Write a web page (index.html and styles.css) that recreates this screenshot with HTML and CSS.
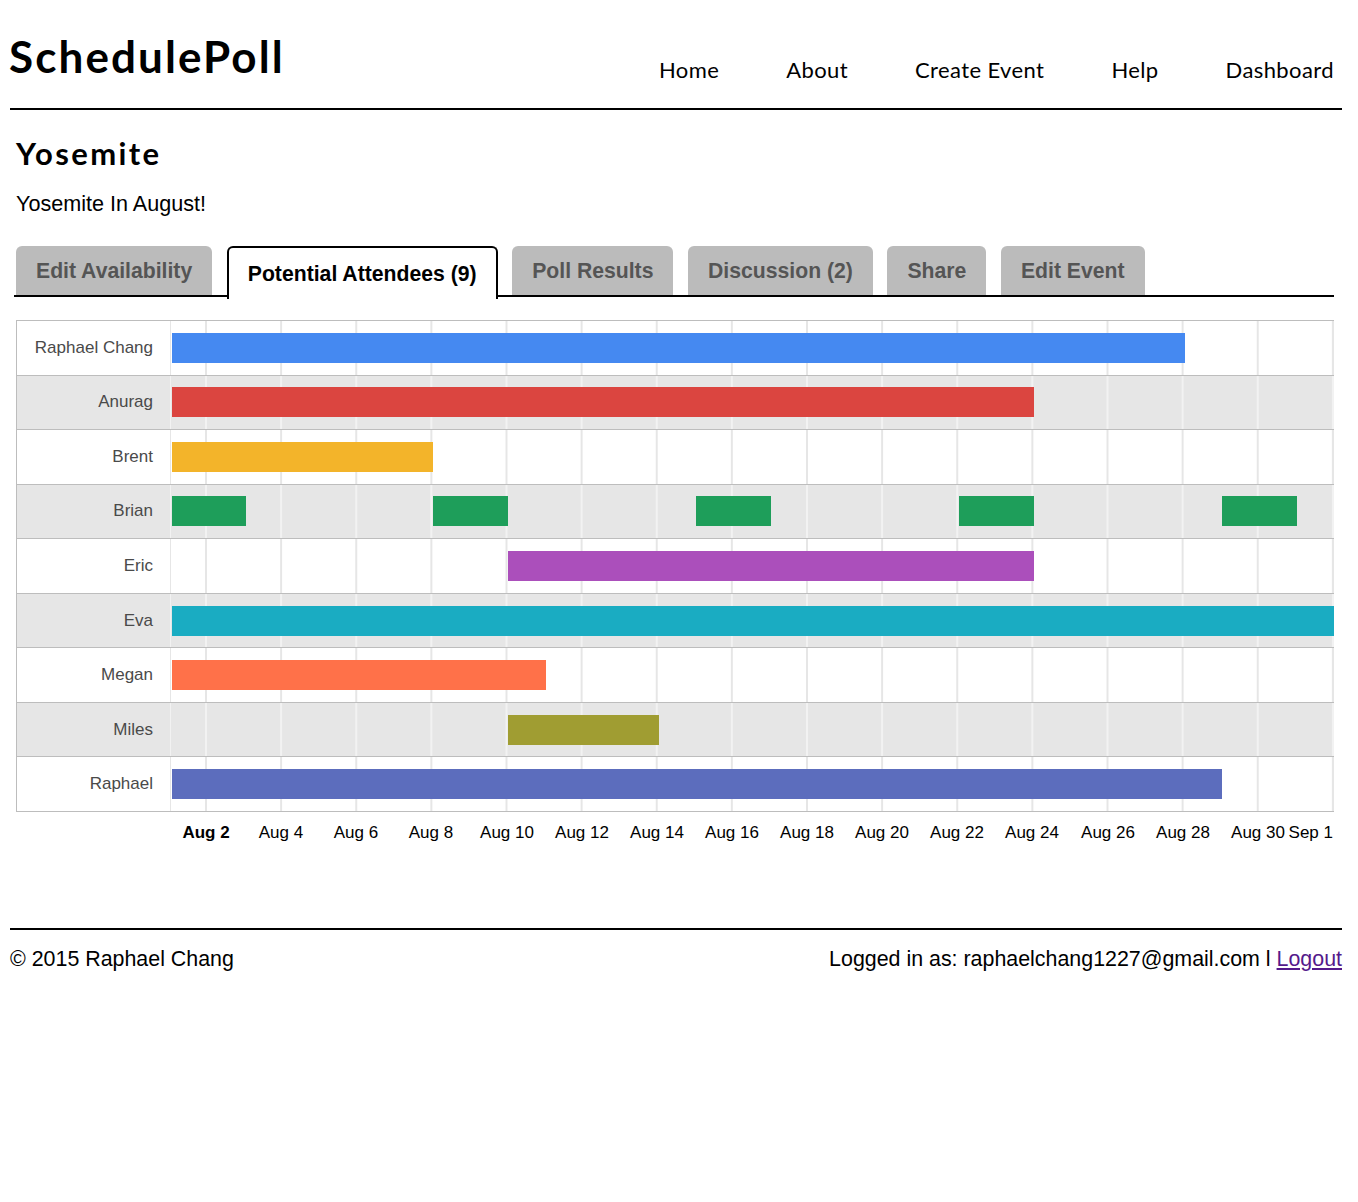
FILE: index.html
```html
<!DOCTYPE html>
<html lang="en">
<head>
<meta charset="utf-8">
<title>SchedulePoll - Yosemite</title>
<link rel="stylesheet" href="styles.css">
</head>
<body>
<div class="page">
  <header class="site-header">
    <div class="logo">SchedulePoll</div>
    <nav class="nav">
      <a class="nav-link" href="#">Home</a>
      <a class="nav-link" href="#">About</a>
      <a class="nav-link" href="#">Create Event</a>
      <a class="nav-link" href="#">Help</a>
      <a class="nav-link" href="#">Dashboard</a>
    </nav>
  </header>

  <main class="content">
    <h1 class="event-title">Yosemite</h1>
    <p class="event-desc">Yosemite In August!</p>

    <div class="tabs">
      <div class="tab">Edit Availability</div>
      <div class="tab active">Potential Attendees (9)</div>
      <div class="tab">Poll Results</div>
      <div class="tab">Discussion (2)</div>
      <div class="tab">Share</div>
      <div class="tab">Edit Event</div>
    </div>

    <div class="chart">
      <div class="row">
        <div class="label">Raphael Chang</div>
        <div class="track"><span class="bar c-blue" style="left:1px;width:1013px"></span></div>
      </div>
      <div class="row alt">
        <div class="label">Anurag</div>
        <div class="track"><span class="bar c-red" style="left:1px;width:862px"></span></div>
      </div>
      <div class="row">
        <div class="label">Brent</div>
        <div class="track"><span class="bar c-yellow" style="left:1px;width:261px"></span></div>
      </div>
      <div class="row alt">
        <div class="label">Brian</div>
        <div class="track">
          <span class="bar c-green" style="left:1px;width:74px"></span>
          <span class="bar c-green" style="left:262px;width:75px"></span>
          <span class="bar c-green" style="left:525px;width:75px"></span>
          <span class="bar c-green" style="left:788px;width:75px"></span>
          <span class="bar c-green" style="left:1051px;width:75px"></span>
        </div>
      </div>
      <div class="row">
        <div class="label">Eric</div>
        <div class="track"><span class="bar c-purple" style="left:337px;width:526px"></span></div>
      </div>
      <div class="row alt">
        <div class="label">Eva</div>
        <div class="track"><span class="bar c-teal" style="left:1px;width:1162px"></span></div>
      </div>
      <div class="row">
        <div class="label">Megan</div>
        <div class="track"><span class="bar c-orange" style="left:1px;width:374px"></span></div>
      </div>
      <div class="row alt">
        <div class="label">Miles</div>
        <div class="track"><span class="bar c-olive" style="left:337px;width:151px"></span></div>
      </div>
      <div class="row">
        <div class="label">Raphael</div>
        <div class="track"><span class="bar c-indigo" style="left:1px;width:1050px"></span></div>
      </div>
    </div>

    <div class="axis">
      <span class="tick strong" style="left:35px">Aug 2</span>
      <span class="tick" style="left:110px">Aug 4</span>
      <span class="tick" style="left:185px">Aug 6</span>
      <span class="tick" style="left:260px">Aug 8</span>
      <span class="tick" style="left:336px">Aug 10</span>
      <span class="tick" style="left:411px">Aug 12</span>
      <span class="tick" style="left:486px">Aug 14</span>
      <span class="tick" style="left:561px">Aug 16</span>
      <span class="tick" style="left:636px">Aug 18</span>
      <span class="tick" style="left:711px">Aug 20</span>
      <span class="tick" style="left:786px">Aug 22</span>
      <span class="tick" style="left:861px">Aug 24</span>
      <span class="tick" style="left:937px">Aug 26</span>
      <span class="tick" style="left:1012px">Aug 28</span>
      <span class="tick" style="left:1087px">Aug 30</span>
      <span class="tick last" style="left:1162px">Sep 1</span>
    </div>
  </main>

  <footer class="site-footer">
    <div class="copy">© 2015 Raphael Chang</div>
    <div class="login">Logged in as: raphaelchang1227@gmail.com l <a class="logout" href="#">Logout</a></div>
  </footer>
</div>
</body>
</html>
```

FILE: styles.css
```css
* { box-sizing: border-box; }

html, body {
  margin: 0;
  padding: 0;
  background: #ffffff;
}

body {
  font-family: "Liberation Sans", Arial, Helvetica, sans-serif;
  color: #000;
}

.page {
  width: 1332px;
  margin-left: 10px;
}

/* Header */
.site-header {
  display: flex;
  justify-content: space-between;
  align-items: flex-start;
  padding-top: 34px;
  padding-bottom: 27px;
  border-bottom: 2px solid #000;
}

.logo {
  font-family: Lato, "Noto Sans", sans-serif;
  font-weight: 700;
  font-size: 44px;
  line-height: 44px;
  margin-left: -1px;
  letter-spacing: 2.1px;
}

.nav {
  display: flex;
  gap: 67px;
  margin-top: 25px;
  margin-right: 8px;
}

.nav-link {
  font-family: Lato, "Noto Sans", sans-serif;
  font-size: 22px;
  line-height: 22px;
  letter-spacing: 0.4px;
  color: #000;
  text-decoration: none;
}

/* Content */
.content {
  padding: 0 8px 0 4px;
}

.event-title {
  font-family: Lato, "Noto Sans", sans-serif;
  font-weight: 700;
  font-size: 31px;
  line-height: 36px;
  letter-spacing: 2.4px;
  margin: 25px 0 0 2px;
}

.event-desc {
  font-size: 21.6px;
  line-height: 24px;
  margin: 21px 0 0 2px;
}

/* Tabs */
.tabs {
  display: flex;
  align-items: flex-start;
  gap: 14.6px;
  margin-top: 30px;
  padding-left: 2px;
  height: 51px;
  border-bottom: 2px solid #000;
}

.tab {
  height: 49px;
  display: flex;
  align-items: center;
  padding: 0 20px;
  background: #bbbbbb;
  color: #555555;
  font-weight: 700;
  font-size: 21.2px;
  border-radius: 6px 6px 0 0;
  white-space: nowrap;
}

.tab.active {
  height: 53px;
  background: #fff;
  color: #000;
  border: 2px solid #000;
  border-bottom: none;
  padding: 0 19px;
  position: relative;
  z-index: 1;
}

/* Chart */
.chart {
  margin: 23px 0 0 2px;
  border-top: 1px solid #bdbdbd;
  border-left: 1px solid #bdbdbd;
  width: 1318px;
}

.row {
  display: flex;
  height: calc(491px / 9);
  border-bottom: 1px solid #bdbdbd;
  background: #fff;
}

.row.alt {
  background: #e6e6e6;
}

.label {
  width: 153px;
  flex: none;
  display: flex;
  align-items: center;
  justify-content: flex-end;
  padding-right: 17px;
  font-size: 17px;
  color: #4a4a4a;
  white-space: nowrap;
}

.track {
  position: relative;
  flex: 1;
  border-left: 1px solid #e6e6e6;
  border-right: 2px solid #e6e6e6;
  background-image: linear-gradient(to right, #e6e6e6 0, #e6e6e6 2px, transparent 2px);
  background-size: 75.14px 100%;
  background-position: 34px 0;
  background-repeat: repeat-x;
}

.row.alt .track {
  border-left-color: #f2f2f2;
  border-right-color: #f2f2f2;
  background-image: linear-gradient(to right, #f2f2f2 0, #f2f2f2 2px, transparent 2px);
}

.bar {
  position: absolute;
  top: 50%;
  height: 30px;
  margin-top: -15px;
}

.c-blue { background: #4589f1; }
.c-red { background: #db4540; }
.c-yellow { background: #f3b42a; }
.c-green { background: #1e9e5a; }
.c-purple { background: #ab4fbb; }
.c-teal { background: #1aacc2; }
.c-orange { background: #ff7149; }
.c-olive { background: #a09d32; }
.c-indigo { background: #5c6dbd; }

/* Axis */
.axis {
  position: relative;
  height: 34px;
  margin-left: 157px;
  width: 1162px;
}

.tick {
  position: absolute;
  top: 11px;
  font-size: 17px;
  line-height: 20px;
  color: #000;
  transform: translateX(-50%);
  white-space: nowrap;
}

.tick.strong {
  font-weight: 700;
}

.tick.last {
  transform: translateX(-100%);
}

/* Footer */
.site-footer {
  margin-top: 82px;
  border-top: 2px solid #000;
  padding-top: 17px;
  display: flex;
  justify-content: space-between;
  font-size: 21.4px;
  line-height: 24px;
}

.logout {
  color: #551a8b;
  text-decoration: underline;
}
```
